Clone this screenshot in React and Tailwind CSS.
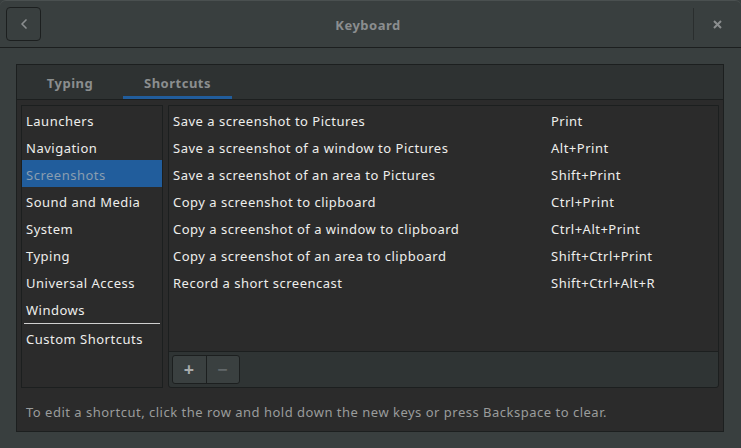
import { ChevronLeft } from "lucide-react";

const categories = [
  "Launchers",
  "Navigation",
  "Screenshots",
  "Sound and Media",
  "System",
  "Typing",
  "Universal Access",
  "Windows",
];

const shortcuts = [
  ["Save a screenshot to Pictures", "Print"],
  ["Save a screenshot of a window to Pictures", "Alt+Print"],
  ["Save a screenshot of an area to Pictures", "Shift+Print"],
  ["Copy a screenshot to clipboard", "Ctrl+Print"],
  ["Copy a screenshot of a window to clipboard", "Ctrl+Alt+Print"],
  ["Copy a screenshot of an area to clipboard", "Shift+Ctrl+Print"],
  ["Record a short screencast", "Shift+Ctrl+Alt+R"],
];

const App = () => {
  return (
    <div className="w-[741px] h-[448px] overflow-hidden bg-[#393f3f] text-[13px] tracking-[0.5px] text-[#eeeeec] font-['Noto_Sans',sans-serif]">
      {/* header bar */}
      <div className="h-[48px] flex items-center border-b border-[#1c1f1f] rounded-t-[6px] border-t border-t-[#4a5050]">
        <div className="ml-[6px] w-[35px] h-[34px] flex items-center justify-center rounded-[4px] border border-[#1c1f1f] bg-[#393f3f]">
          <ChevronLeft size={16} strokeWidth={2.5} className="text-[#8b8e8f]" />
        </div>
        <div className="flex-1 text-center font-bold text-[#8b8e8f] pt-[4px] pl-[2px]">Keyboard</div>
        <div className="w-px h-[32px] bg-[#2a2e2e]" />
        <div className="w-[47px] flex items-center justify-center text-[#8b8e8f]">
          <svg width="9" height="9" viewBox="0 0 9 9">
            <path d="M1 1L8 8M8 1L1 8" stroke="currentColor" strokeWidth="2" />
          </svg>
        </div>
      </div>

      <div className="pl-4 pt-4">
        <div className="w-[708px] h-[368px] border border-[#1c1f1f] bg-[#2b2b2b] flex flex-col">
          {/* tabs */}
          <div className="h-[35px] bg-[#2e3232] border-b border-[#1c1f1f] flex items-end text-[#8b8e8f] font-bold">
            <div className="w-[106px] h-full flex items-center justify-center pt-[4px]">Typing</div>
            <div className="w-[109px] h-full flex items-center justify-center border-b-[3px] border-[#215d9c] pt-[6px]">
              Shortcuts
            </div>
          </div>

          {/* content */}
          <div className="flex gap-[5px] px-[4px] pt-[5px]">
            <div className="w-[142px] h-[283px] border border-[#1c1f1f] bg-[#2b2b2b]">
              {categories.map((c) => (
                <div
                  key={c}
                  className={
                    c === "Screenshots"
                      ? "h-[27px] flex items-center px-[4px] pt-[4px] bg-[#215d9c] text-[#8a9db0]"
                      : "h-[27px] flex items-center px-[4px] pt-[4px]"
                  }
                >
                  {c}
                </div>
              ))}
              <div className="mt-[1px] mx-[2px] h-px bg-[#d0d0d0]" />
              <div className="h-[27px] flex items-center px-[4px] pt-[4px]">Custom Shortcuts</div>
            </div>

            <div className="w-[551px] h-[283px] border border-[#1c1f1f] rounded-b-[3px] flex flex-col">
              <div className="flex-1">
                {shortcuts.map(([name, keys]) => (
                  <div key={name} className="h-[27px] flex items-center px-[4px] pt-[4px]">
                    <div className="w-[378px]">{name}</div>
                    <div>{keys}</div>
                  </div>
                ))}
              </div>
              <div className="h-[36px] border-t border-[#1c1f1f] bg-[#2f3434] rounded-b-[3px] px-[3px] pt-[3px]">
                <div className="flex w-[68px] h-[29px] border border-[#1c1f1f] rounded-[3px] bg-[#3a4040]">
                  <div className="flex-1 flex items-center justify-center border-r border-[#1c1f1f] text-[#a8acac] text-[18px] font-bold">
                    +
                  </div>
                  <div className="flex-1 flex items-center justify-center text-[#62686a] text-[18px] font-bold">
                    −
                  </div>
                </div>
              </div>
            </div>
          </div>

          <div className="flex-1 flex items-center px-[9px] pt-[6px] text-[#9a9c9c]">
            To edit a shortcut, click the row and hold down the new keys or press Backspace to clear.
          </div>
        </div>
      </div>
    </div>
  );
};

export default App;
